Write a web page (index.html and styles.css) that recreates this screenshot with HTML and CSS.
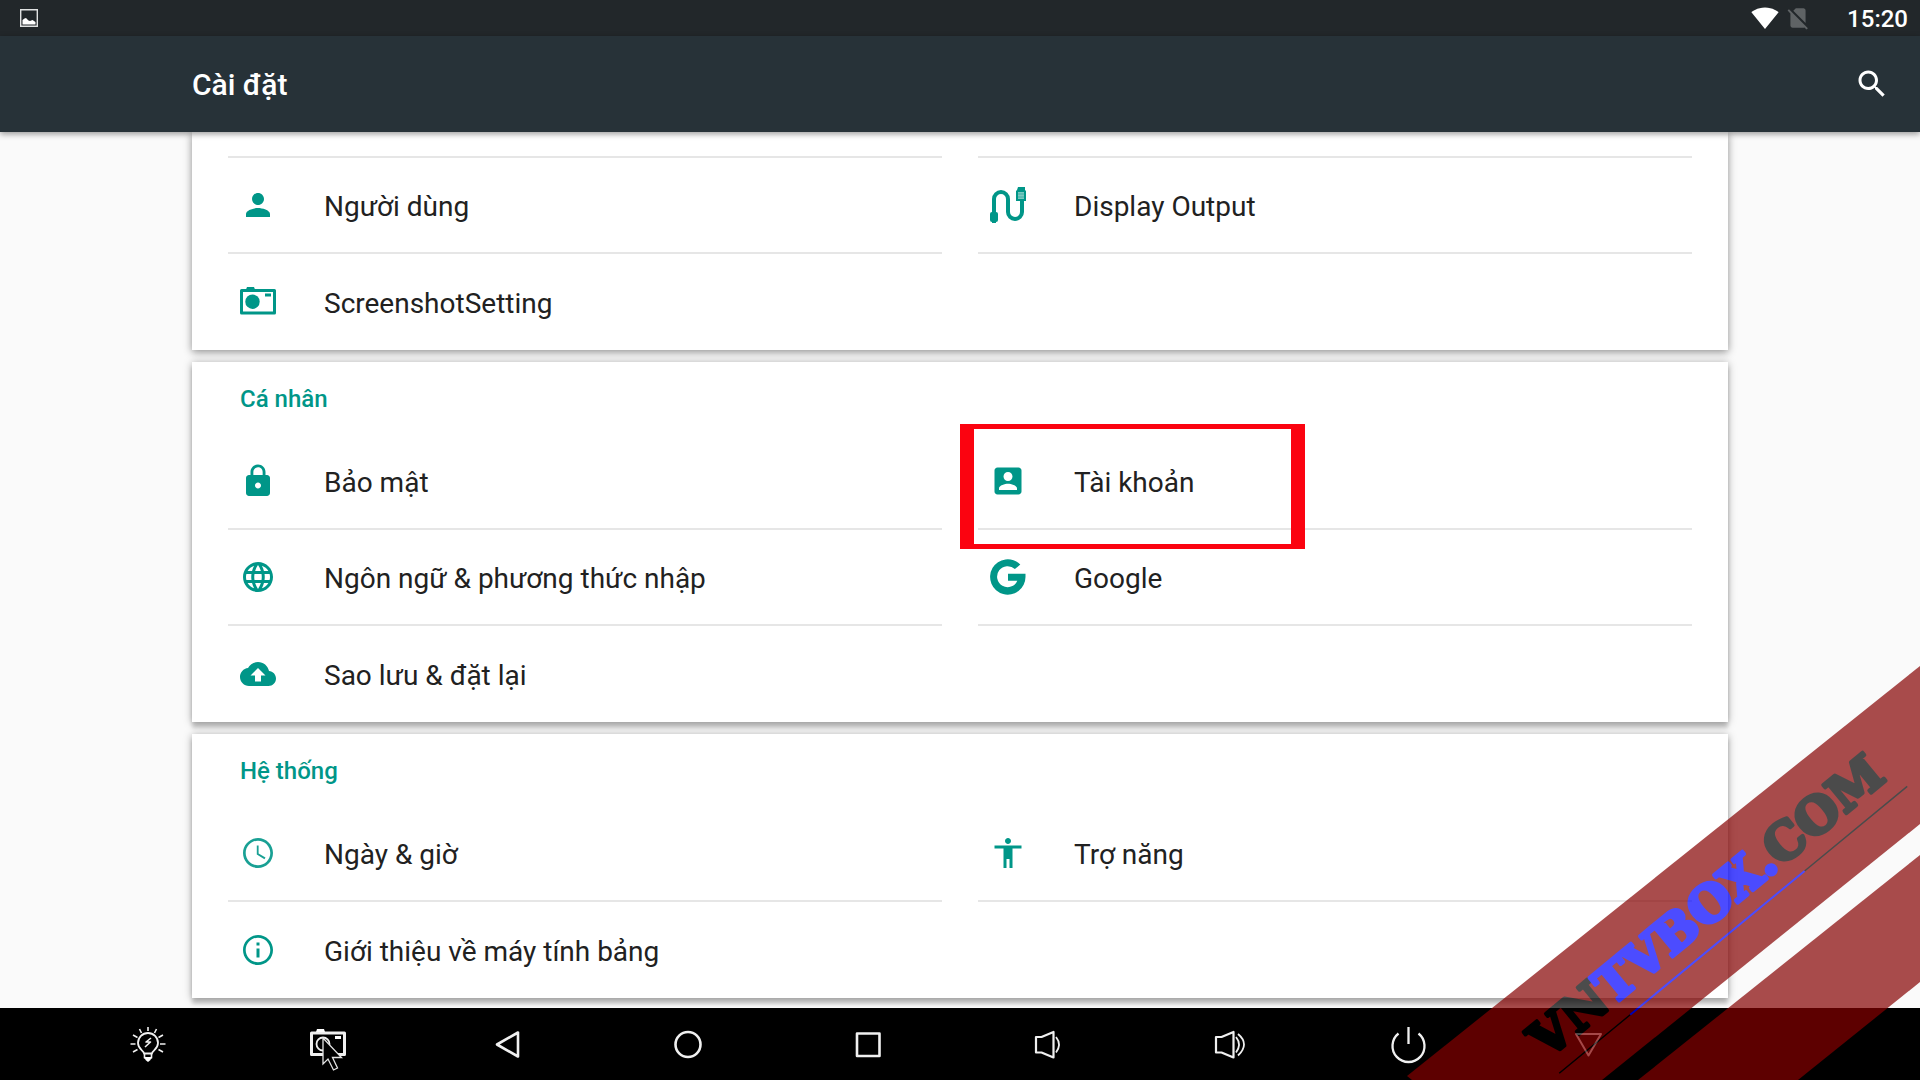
FILE: index.html
```html
<!DOCTYPE html>
<html lang="vi">
<head>
<meta charset="utf-8">
<meta name="viewport" content="width=device-width, initial-scale=1">
<title>Cài đặt</title>
<link rel="stylesheet" href="styles.css">
</head>
<body>
<div class="status-bar">
  <svg class="status-picture" viewBox="0 0 18 18" aria-hidden="true"><path d="M.7.7h16.6v16.6H.7z" fill="none" stroke="#e0e2e2" stroke-width="1.4"/><path d="M2.500 15.500V11l2-1.500L6 9l2.500 2.500 1.500.5 2.500-1 3 2v2.500z" fill="#fff"/></svg>
  <svg class="status-wifi" viewBox="0 0 24 24" aria-hidden="true"><path fill="#fff" d="M12.010 21.490L23.640 7c-.45-.34-4.930-4-11.640-4C5.280 3 .81 6.660.36 7l11.630 14.490.010.010z"/></svg>
  <svg class="status-sim" viewBox="0 0 24 24" aria-hidden="true"><path fill="#5f6365" d="M18.990 5c0-1.100-.89-2-1.990-2h-7L7.660 5.340 19 16.680zM3.650 3.880L2.380 5.150 5 7.770V19c0 1.100.9 2 2 2h10.010c.35 0 .67-.1.960-.26l1.880 1.880 1.270-1.270z"/></svg>
  <time class="status-time">15:20</time>
</div>

<header class="app-bar">
  <h1 class="app-title">Cài đặt</h1>
  <button class="search-button" type="button" aria-label="Tìm kiếm">
    <svg class="icon" viewBox="0 0 24 24"><path fill="#fff" d="M15.500 14h-.79l-.28-.27C15.410 12.590 16 11.110 16 9.500 16 5.910 13.090 3 9.500 3S3 5.910 3 9.500 5.910 16 9.500 16c1.610 0 3.090-.59 4.230-1.570l.27.28v.79l5 4.990L20.490 19l-4.990-5zm-6 0C7.010 14 5 11.990 5 9.500S7.010 5 9.500 5 14 7.010 14 9.500 11.990 14 9.500 14z"/></svg>
  </button>
</header>

<main class="settings">
  <section class="card card-device">
    <div class="tiles">
      <div class="tile tile-partial"></div>
      <div class="tile tile-partial"></div>
      <a class="tile" href="#users">
        <svg class="icon" viewBox="0 0 24 24"><path d="M12 12c2.210 0 4-1.790 4-4s-1.790-4-4-4-4 1.790-4 4 1.790 4 4 4zm0 2c-2.670 0-8 1.340-8 4v2h16v-2c0-2.660-5.330-4-8-4z"/></svg>
        <span class="tile-label">Người dùng</span>
      </a>
      <a class="tile" href="#display">
        <svg class="icon" viewBox="0 0 36 36"><path d="M4 27V12a7 7 0 0 1 14 0v13a7 7 0 0 0 14 0V13" fill="none" stroke="#009688" stroke-width="4"/><rect y="25" width="8" height="10" rx="2"/><rect x="2" y="30" width="4" height="6"/><path d="M28 0h7v3l1 1v10H26V4l1-1z"/><path d="M28 5h6v7h-6z" fill="#7cc9c1"/><path d="M28 7h6M28 10h6" stroke="#3fb0a5"/></svg>
        <span class="tile-label">Display Output</span>
      </a>
      <a class="tile tile-last" href="#screenshot">
        <svg class="icon" viewBox="0 0 36 36"><path d="M1.500 6.500h33v22.500h-33z" fill="none" stroke="#009688" stroke-width="3" stroke-linejoin="round"/><path d="M6 5.500l1-2.500h7l1 2.500zM25 9.500h6v3h-6z"/><circle cx="12.500" cy="17.700" r="7.200"/></svg>
        <span class="tile-label">ScreenshotSetting</span>
      </a>
    </div>
  </section>

  <section class="card">
    <h2 class="card-title">Cá nhân</h2>
    <div class="tiles">
      <a class="tile" href="#security">
        <svg class="icon" viewBox="0 0 24 24"><path d="M18 8h-1V6c0-2.760-2.240-5-5-5S7 3.240 7 6v2H6c-1.100 0-2 .9-2 2v10c0 1.100.9 2 2 2h12c1.100 0 2-.9 2-2V10c0-1.100-.9-2-2-2zm-6 9c-1.100 0-2-.9-2-2s.9-2 2-2 2 .9 2 2-.9 2-2 2zm3.100-9H8.900V6c0-1.710 1.390-3.100 3.100-3.100s3.100 1.390 3.100 3.100z"/></svg>
        <span class="tile-label">Bảo mật</span>
      </a>
      <a class="tile" href="#accounts">
        <svg class="icon" viewBox="0 0 24 24"><path d="M3 5v14c0 1.100.89 2 2 2h14c1.100 0 2-.9 2-2V5c0-1.100-.9-2-2-2H5c-1.110 0-2 .9-2 2zm12 4c0 1.660-1.340 3-3 3s-3-1.340-3-3 1.340-3 3-3 3 1.340 3 3zm-9 8c0-2 4-3.100 6-3.100s6 1.100 6 3.100v1H6z"/></svg>
        <span class="tile-label">Tài khoản</span>
        <span class="highlight"></span>
      </a>
      <a class="tile" href="#language">
        <svg class="icon" viewBox="0 0 24 24"><path d="M11.990 2C6.470 2 2 6.480 2 12s4.470 10 9.990 10C17.520 22 22 17.520 22 12S17.520 2 11.990 2zm6.930 6h-2.950c-.32-1.250-.78-2.450-1.380-3.560 1.840.63 3.370 1.910 4.330 3.560zM12 4.040c.83 1.200 1.480 2.530 1.910 3.960h-3.820c.43-1.430 1.080-2.760 1.910-3.960zM4.260 14C4.100 13.360 4 12.690 4 12s.1-1.360.26-2h3.380c-.08.66-.14 1.320-.14 2s.06 1.340.14 2zm.82 2h2.950c.32 1.250.78 2.450 1.380 3.560-1.840-.63-3.370-1.900-4.330-3.560zm2.950-8H5.080c.96-1.660 2.490-2.930 4.330-3.560C8.810 5.550 8.350 6.750 8.030 8zM12 19.960c-.83-1.200-1.480-2.530-1.910-3.960h3.820c-.43 1.430-1.080 2.760-1.910 3.960zM14.340 14H9.660c-.09-.66-.16-1.320-.16-2s.07-1.350.16-2h4.680c.09.650.16 1.320.16 2s-.07 1.340-.16 2zm.25 5.560c.6-1.110 1.060-2.310 1.380-3.560h2.950c-.96 1.650-2.490 2.930-4.330 3.560zM16.360 14c.08-.66.14-1.320.14-2s-.06-1.340-.14-2h3.380c.16.640.26 1.310.26 2s-.1 1.360-.26 2z"/></svg>
        <span class="tile-label">Ngôn ngữ &amp; phương thức nhập</span>
      </a>
      <a class="tile" href="#google">
        <svg class="icon" viewBox="0 0 36 36"><path d="M30.300 5.400A17.700 17.700 0 1 0 35.500 18v-3.300H18v7h9.300a10.500 10.500 0 1 1-2.400-11.600z"/></svg>
        <span class="tile-label">Google</span>
      </a>
      <a class="tile tile-last" href="#backup">
        <svg class="icon" viewBox="0 0 24 24"><path d="M19.350 10.040C18.670 6.590 15.640 4 12 4 9.110 4 6.600 5.640 5.350 8.040 2.340 8.360 0 10.910 0 14c0 3.310 2.690 6 6 6h13c2.760 0 5-2.240 5-5 0-2.640-2.050-4.780-4.650-4.960zM14 13v4h-4v-4H7l5-5 5 5z"/></svg>
        <span class="tile-label">Sao lưu &amp; đặt lại</span>
      </a>
    </div>
  </section>

  <section class="card">
    <h2 class="card-title">Hệ thống</h2>
    <div class="tiles">
      <a class="tile" href="#date">
        <svg class="icon" viewBox="0 0 24 24"><path fill-opacity=".9" d="M11.990 2C6.470 2 2 6.480 2 12s4.470 10 9.990 10C17.520 22 22 17.520 22 12S17.520 2 11.990 2zM12 20.200c-4.500 0-8.200-3.700-8.200-8.200S7.500 3.800 12 3.800s8.200 3.700 8.200 8.200-3.700 8.200-8.200 8.200zM12.400 7H11.200v6l5.100 3.100.7-1.100-4.600-2.700z"/></svg>
        <span class="tile-label">Ngày &amp; giờ</span>
      </a>
      <a class="tile" href="#accessibility">
        <svg class="icon" viewBox="0 0 24 24"><path d="M12 2c1.100 0 2 .9 2 2s-.9 2-2 2-2-.9-2-2 .9-2 2-2zm9 7h-6v13h-2v-6h-2v6H9V9H3V7h18z"/></svg>
        <span class="tile-label">Trợ năng</span>
      </a>
      <a class="tile tile-last" href="#about">
        <svg class="icon" viewBox="0 0 24 24"><path d="M11 17h2v-6h-2zm1-15C6.480 2 2 6.480 2 12s4.480 10 10 10 10-4.480 10-10S17.520 2 12 2zm0 18.200c-4.500 0-8.200-3.700-8.200-8.200S7.500 3.800 12 3.800s8.200 3.700 8.200 8.200-3.700 8.200-8.200 8.200zM11 9h2V7h-2z"/></svg>
        <span class="tile-label">Giới thiệu về máy tính bảng</span>
      </a>
    </div>
  </section>
</main>

<nav class="nav-bar">
  <button class="nav-button" type="button" aria-label="Đèn">
    <svg class="nav-icon" viewBox="0 0 36 36"><path d="M14 27.500c0-3-6-4-6-10.500a10 10 0 0 1 20 0c0 6.500-6 7.500-6 10.500z" stroke-width="1.800"/><path d="M14.500 28v4h7v-4M18 1v4M9.500 3l2 4M26.500 3l-2 4M3 9l4.500 2.500M33 9l-4.500 2.500M.5 18h5M30 18h5.500M3 26l4.500-2.500M33 26l-4.500-2.500M21 12l-5 4h4.500L15 21" stroke-width="1.600"/><path d="M14.500 31h7l-1 3-2.500 2-2.500-2z" fill="#fff" stroke="none"/></svg>
  </button>
  <button class="nav-button" type="button" aria-label="Chụp màn hình">
    <svg class="nav-icon" viewBox="0 0 36 36"><path d="M1.500 7h33v21.500h-33z" stroke-width="3"/><path d="M6 6l1-3h7l1 3zM25 10h6v3h-6z" fill="#fff" stroke="none"/><circle cx="13" cy="18" r="6.500" stroke-width="1.800"/></svg>
    <svg class="cursor" viewBox="0 0 22 34" aria-hidden="true"><path d="M1 1v26l5-5 5.500 11 4-2-5-10.500h9z" fill="#000" stroke="#e4e4e4" stroke-width="1.300"/></svg>
  </button>
  <button class="nav-button" type="button" aria-label="Quay lại">
    <svg class="nav-icon" viewBox="0 0 36 36"><path d="M7 18.500L28 6.500v24z"/></svg>
  </button>
  <button class="nav-button" type="button" aria-label="Màn hình chính">
    <svg class="nav-icon" viewBox="0 0 36 36"><circle cx="18" cy="18.500" r="12.500"/></svg>
  </button>
  <button class="nav-button" type="button" aria-label="Tổng quan">
    <svg class="nav-icon" viewBox="0 0 36 36"><path d="M7 7.500h22.500v22.500H7z"/></svg>
  </button>
  <button class="nav-button" type="button" aria-label="Giảm âm lượng">
    <svg class="nav-icon" viewBox="0 0 36 36"><path d="M6 11h5.500l12-5v25.500l-12-5H6z" stroke-width="2.200"/><path d="M26 11q6 7.500 0 15.500" stroke-width="1.800"/></svg>
  </button>
  <button class="nav-button" type="button" aria-label="Tăng âm lượng">
    <svg class="nav-icon" viewBox="0 0 36 36"><path d="M6 11h5.500l12-5v25.500l-12-5H6z" stroke-width="2.200"/><path d="M26 11q6 7.500 0 15.500M28 8q12 10 0 21.500" stroke-width="1.800"/></svg>
  </button>
  <button class="nav-button" type="button" aria-label="Nguồn">
    <svg class="nav-icon" viewBox="0 0 36 36"><path d="M8.500 7.500a16 16 0 1 0 20 0M18.500 1v17" stroke-width="2.300"/></svg>
  </button>
  <button class="nav-button" type="button" aria-label="Ẩn thanh điều hướng">
    <svg class="nav-icon" viewBox="0 0 36 36"><path d="M6 8h25L18.500 29.500z" stroke-width="2"/></svg>
  </button>
</nav>

<svg class="ribbon" viewBox="0 0 520 420" aria-label="VNTVBOX.COM">
  <path d="M520 6L7 416l5 4h190L520 164z" fill="#850000"/>
  <path d="M520 195L238 420h160L520 322z" fill="#850000"/>
  <g transform="translate(147 400) rotate(-39.500)">
    <text class="ribbon-text" x="0" y="0">VN<tspan class="ribbon-accent">TVBOX.</tspan>COM</text>
    <path d="M1 18h92M319 18h133" stroke="#000" stroke-width="1.500"/>
    <path d="M93 18h226" stroke="#00f" stroke-width="2"/>
  </g>
</svg>
</body>
</html>
```
FILE: styles.css
```css
* {
  box-sizing: border-box;
}

body {
  display: flex;
  flex-direction: column;
  min-height: 100vh;
  margin: 0;
  background: #fafafa;
  color: #212121;
  font-family: Roboto, "Noto Sans", sans-serif;
  overflow-x: hidden;
}

h1,
h2 {
  margin: 0;
  font-weight: 500;
}

button {
  padding: 0;
  border: 0;
  background: none;
}

svg {
  display: block;
  flex: none;
}

.status-bar {
  display: flex;
  align-items: center;
  height: 36px;
  padding: 0 12px 0 20px;
  background: #22272a;
  color: #fff;
}

.status-picture {
  width: 18px;
  height: 18px;
  margin-right: auto;
}

.status-wifi {
  width: 28px;
  height: 28px;
}

.status-sim {
  width: 26px;
  height: 26px;
  margin: 0 36px 0 6px;
}

.status-time {
  padding-top: 2px;
  font-size: 24px;
  line-height: 28px;
  font-weight: 500;
}

.app-bar {
  position: relative;
  z-index: 1;
  display: flex;
  align-items: center;
  justify-content: space-between;
  height: 96px;
  padding: 0 30px 0 10%;
  background: #273238;
  box-shadow: 0 2px 6px rgba(0, 0, 0, 0.4);
}

.app-title {
  padding-top: 2px;
  color: #fff;
  font-size: 30px;
  line-height: 36px;
}

.icon {
  width: 36px;
  height: 36px;
  fill: #009688;
}

.settings {
  flex: 1;
  display: flex;
  flex-direction: column;
  gap: 12px;
  padding: 0 10% 10px;
}

.card {
  padding: 0 36px;
  background: #fff;
  box-shadow: 0 6px 4px rgba(0, 0, 0, 0.16), 0 1px 8px rgba(0, 0, 0, 0.34);
}

.card-device {
  box-shadow: 0 2px 8px rgba(0, 0, 0, 0.44);
}

.card-title {
  height: 72px;
  padding: 23px 12px 21px;
  color: #009688;
  font-size: 24px;
  line-height: 28px;
}

.tiles {
  display: grid;
  grid-template-columns: 1fr 1fr;
  column-gap: 36px;
}

.tile {
  position: relative;
  display: flex;
  align-items: center;
  gap: 48px;
  height: 96px;
  padding: 0 12px;
  border-bottom: 2px solid #e6e6e6;
  color: inherit;
  text-decoration: none;
}

.tile-partial {
  height: 26px;
}

.tile-last {
  border-bottom: 0;
}

.tile-label {
  padding-top: 4px;
  font-size: 28px;
  line-height: 36px;
}

/* Red frame drawn over the accounts tile */
.highlight {
  position: absolute;
  top: -10px;
  left: -18px;
  z-index: 1;
  width: 345px;
  height: 125px;
  border: 5px solid #fb0310;
  border-width: 5px 14px;
}

.nav-bar {
  position: relative;
  display: flex;
  height: 72px;
  padding: 0 242px 0 58px;
  background: #000;
}

.nav-button {
  position: relative;
  flex: 1;
  display: flex;
  align-items: center;
  justify-content: center;
}

.nav-icon {
  width: 36px;
  height: 36px;
  fill: none;
  stroke: #f0f0f0;
  stroke-width: 2.600;
  stroke-linejoin: round;
  overflow: visible;
}

.cursor {
  position: absolute;
  top: 29px;
  left: calc(50% - 6px);
  width: 22px;
  height: 34px;
}

.ribbon {
  position: fixed;
  right: 0;
  bottom: 0;
  width: 520px;
  height: 420px;
  opacity: 0.7;
  pointer-events: none;
}

.ribbon-text {
  fill: #000;
  stroke: #000;
  stroke-width: 4;
  stroke-linejoin: round;
  font-family: "DejaVu Serif", serif;
  font-size: 50px;
  font-weight: 700;
}

.ribbon-accent {
  fill: #00f;
  stroke: #00f;
}
```
